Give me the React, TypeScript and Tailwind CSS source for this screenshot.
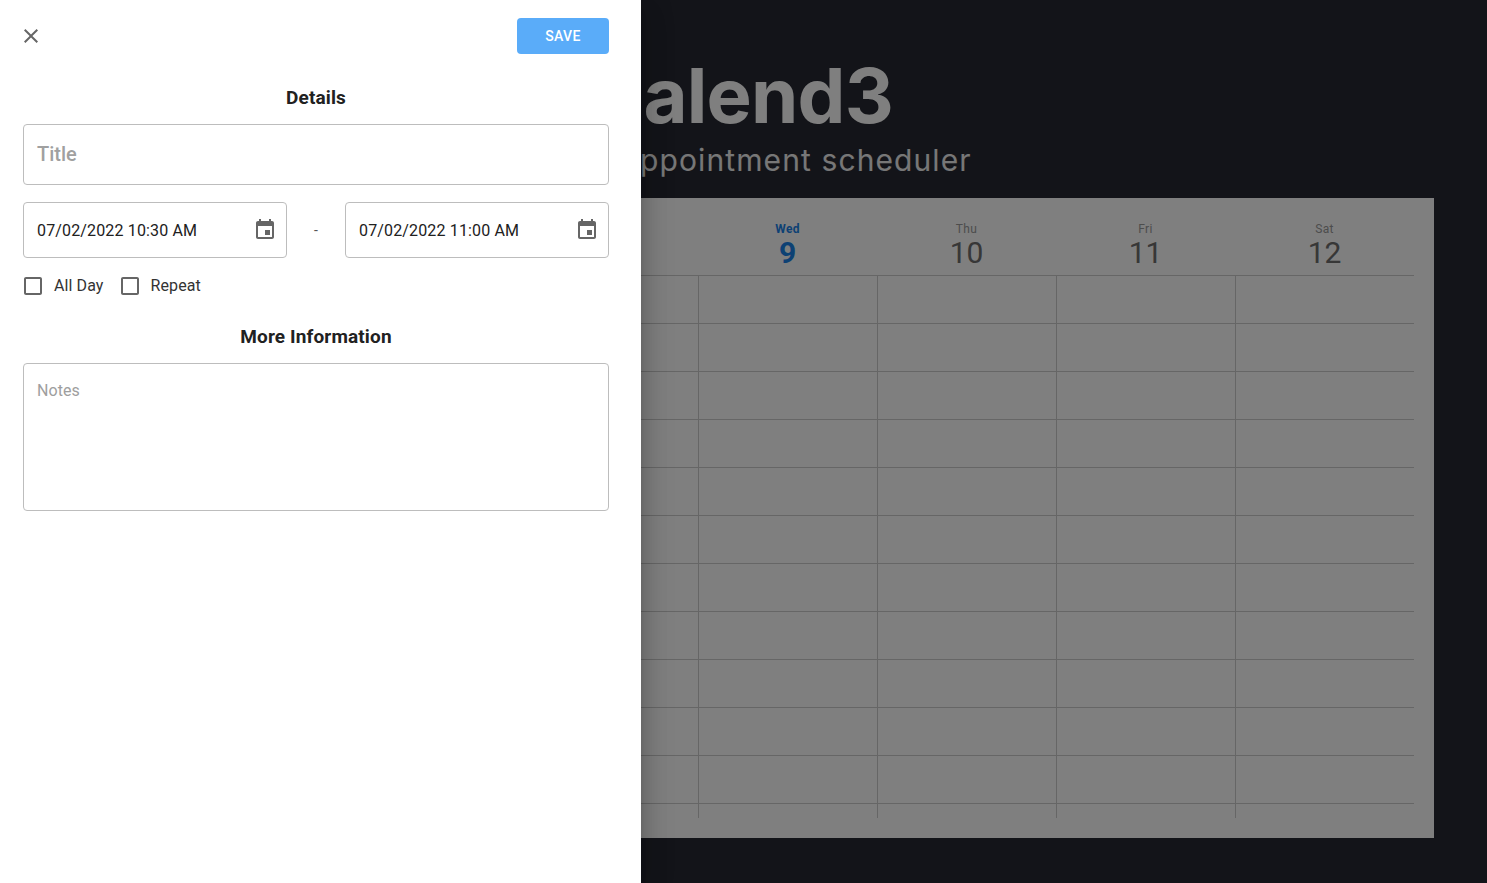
const days = [
  { key: "sun", name: "", date: "" },
  { key: "mon", name: "", date: "" },
  { key: "tue", name: "", date: "" },
  { key: "wed", name: "Wed", date: "9", today: true },
  { key: "thu", name: "Thu", date: "10" },
  { key: "fri", name: "Fri", date: "11" },
  { key: "sat", name: "Sat", date: "12" },
];

const rows = [0, 1, 2, 3, 4, 5, 6, 7, 8, 9, 10];

function CalendarIcon() {
  return (
    <svg viewBox="0 0 24 24" className="h-6 w-6 fill-[#666666]">
      <path d="M17 12h-5v5h5v-5zM16 1v2H8V1H6v2H5c-1.11 0-1.99.9-1.99 2L3 19c0 1.1.89 2 2 2h14c1.1 0 2-.9 2-2V5c0-1.1-.9-2-2-2h-1V1h-2zm3 18H5V8h14v11z" />
    </svg>
  );
}

function CheckBox({ label }: { label: string }) {
  return (
    <label className="flex items-center gap-[9px]">
      <svg viewBox="0 0 24 24" className="h-6 w-6 fill-[#666666]">
        <path d="M19 5v14H5V5h14m0-2H5c-1.1 0-2 .9-2 2v14c0 1.1.9 2 2 2h14c1.1 0 2-.9 2-2V5c0-1.1-.9-2-2-2z" />
      </svg>
      <span className="text-[16px] leading-6 tracking-[0.1px] text-[#333333]">{label}</span>
    </label>
  );
}

function DateField({ value }: { value: string }) {
  return (
    <div className="flex h-14 w-[264px] items-center justify-between rounded border border-[#bdbdbd] pl-[13px] pr-[9px]">
      <span className="pt-[2px] text-[16px] tracking-[0.15px] text-[#212121]">{value}</span>
      <CalendarIcon />
    </div>
  );
}

function Drawer() {
  return (
    <aside className="absolute inset-y-0 left-0 w-[641px] bg-white pl-[23px] pr-[32px] pt-[18px] font-['Roboto',sans-serif] shadow-[0_8px_10px_-5px_rgba(0,0,0,0.2),0_16px_24px_2px_rgba(0,0,0,0.14),0_6px_30px_5px_rgba(0,0,0,0.12)]">
      <div className="flex h-9 items-center justify-between">
        <button type="button" className="-ml-1">
          <svg viewBox="0 0 24 24" className="h-6 w-6 fill-[#666666]">
            <path d="M19 6.41L17.59 5 12 10.59 6.41 5 5 6.41 10.59 12 5 17.59 6.41 19 12 13.41 17.59 19 19 17.59 13.41 12 19 6.41z" />
          </svg>
        </button>
        <button
          type="button"
          className="h-9 w-[92px] rounded bg-[#5aacf9] pt-[1px] text-[14px] font-medium tracking-[0.4px] text-white"
        >
          SAVE
        </button>
      </div>

      <h2 className="mt-[32px] text-center text-[19px] font-bold leading-6 tracking-[0.13px] text-[#212121]">Details</h2>

      <div className="mt-[14px] flex h-[61px] items-center rounded border border-[#bdbdbd] pb-[2px] pl-[13px] text-[20px] font-medium text-[#a0a0a0]">
        Title
      </div>

      <div className="mt-[17px] flex items-center justify-between">
        <DateField value="07/02/2022 10:30 AM" />
        <span className="text-[14px] text-[#555555]">-</span>
        <DateField value="07/02/2022 11:00 AM" />
      </div>

      <div className="mt-4 -ml-[2px] flex items-center gap-[14px]">
        <CheckBox label="All Day" />
        <CheckBox label="Repeat" />
      </div>

      <h2 className="mt-[27px] text-center text-[19px] font-bold leading-6 tracking-[0.13px] text-[#212121]">More Information</h2>

      <div className="mt-[14px] h-[148px] rounded border border-[#bdbdbd] pl-[13px] pt-[17px] text-[16px] leading-[20px] tracking-[0.05px] text-[#9e9e9e]">
        Notes
      </div>
    </aside>
  );
}

function Calendar() {
  return (
    <section className="bg-white px-5 pb-5 font-['Roboto',sans-serif]">
      <div className="flex h-[77px] pl-[88px]">
        {days.map((d) => (
          <div key={d.key} className={`w-[179px] pt-[24px] text-center ${d.today ? "text-[#1a82e8]" : "text-[#6e6e6e]"}`}>
            <div className={`text-[12px] leading-[14px] tracking-[0.3px] ${d.today ? "font-bold" : "text-[#9a9a9a]"}`}>{d.name}</div>
            <div className={`text-[30px] leading-[34px] ${d.today ? "font-bold" : ""}`}>{d.date}</div>
          </div>
        ))}
      </div>
      {rows.map((r) => (
        <div key={r} className="flex h-12 border-t border-[#cccccc] pl-[88px]">
          {days.map((d) => (
            <div key={d.key} className="w-[179px] border-l border-[#cccccc]" />
          ))}
        </div>
      ))}
      <div className="flex h-[15px] border-t border-[#cccccc] pl-[88px]">
        {days.map((d) => (
          <div key={d.key} className="w-[179px] border-l border-[#cccccc]" />
        ))}
      </div>
    </section>
  );
}

export default function App() {
  return (
    <div className="relative h-screen overflow-hidden bg-[#272932] font-['Inter',sans-serif]">
      <main className="px-[53px] pt-[49px]">
        <h1 className="pr-[6px] text-center text-[76px] font-bold leading-[92px] tracking-[-0.8px] text-white">Calend3</h1>
        <p className="pl-[103px] text-center text-[30px] leading-[38px] tracking-[1.1px] text-[#eeeeee]">Appointment scheduler</p>
        <div className="mt-[19px]">
          <Calendar />
        </div>
      </main>
      <div className="absolute inset-0 bg-black/50" />
      <Drawer />
    </div>
  );
}
